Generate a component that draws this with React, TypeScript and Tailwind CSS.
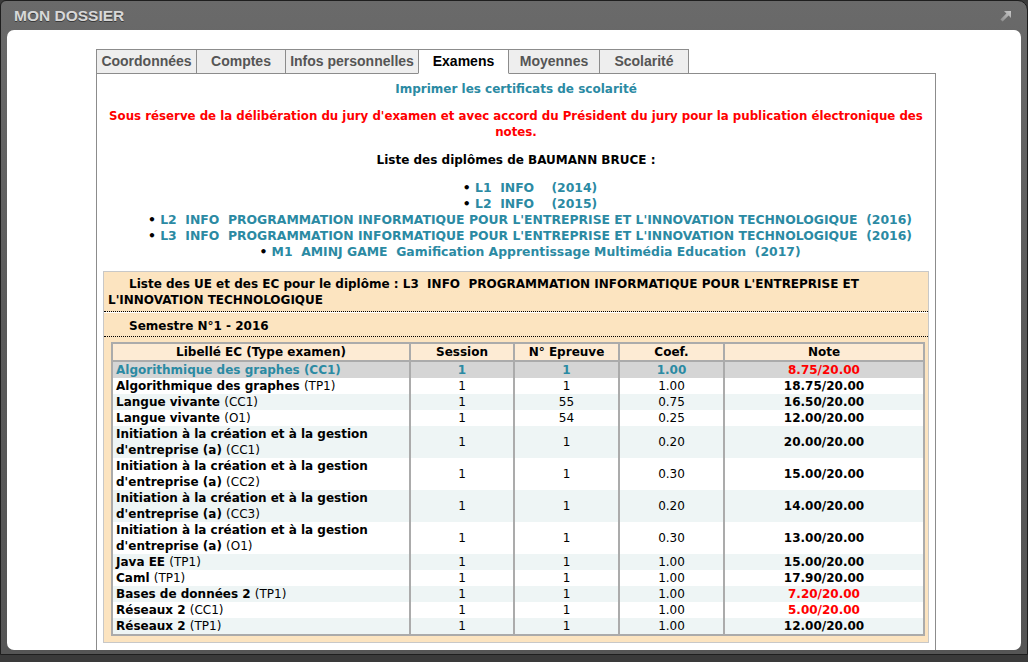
import React from "react";

const tabs = [
  { label: "Coordonnées", w: "w-[101px]" },
  { label: "Comptes", w: "w-[90px]" },
  { label: "Infos personnelles", w: "w-[134px]" },
  { label: "Examens", w: "w-[91px]", active: true },
  { label: "Moyennes", w: "w-[92px]" },
  { label: "Scolarité", w: "w-[90px]" },
];

const diplomes = [
  "L1  INFO    (2014)",
  "L2  INFO    (2015)",
  "L2  INFO  PROGRAMMATION INFORMATIQUE POUR L'ENTREPRISE ET L'INNOVATION TECHNOLOGIQUE  (2016)",
  "L3  INFO  PROGRAMMATION INFORMATIQUE POUR L'ENTREPRISE ET L'INNOVATION TECHNOLOGIQUE  (2016)",
  "M1  AMINJ GAME  Gamification Apprentissage Multimédia Education  (2017)",
];

type Row = {
  ec: string;
  type: string;
  session: string;
  epreuve: string;
  coef: string;
  note: string;
  low?: boolean;
};

const INIT = "Initiation à la création et à la gestion d'entreprise (a)";

const rows: Row[] = [
  { ec: "Algorithmique des graphes", type: "(CC1)", session: "1", epreuve: "1", coef: "1.00", note: "8.75/20.00", low: true },
  { ec: "Algorithmique des graphes", type: "(TP1)", session: "1", epreuve: "1", coef: "1.00", note: "18.75/20.00" },
  { ec: "Langue vivante", type: "(CC1)", session: "1", epreuve: "55", coef: "0.75", note: "16.50/20.00" },
  { ec: "Langue vivante", type: "(O1)", session: "1", epreuve: "54", coef: "0.25", note: "12.00/20.00" },
  { ec: INIT, type: "(CC1)", session: "1", epreuve: "1", coef: "0.20", note: "20.00/20.00" },
  { ec: INIT, type: "(CC2)", session: "1", epreuve: "1", coef: "0.30", note: "15.00/20.00" },
  { ec: INIT, type: "(CC3)", session: "1", epreuve: "1", coef: "0.20", note: "14.00/20.00" },
  { ec: INIT, type: "(O1)", session: "1", epreuve: "1", coef: "0.30", note: "13.00/20.00" },
  { ec: "Java EE", type: "(TP1)", session: "1", epreuve: "1", coef: "1.00", note: "15.00/20.00" },
  { ec: "Caml", type: "(TP1)", session: "1", epreuve: "1", coef: "1.00", note: "17.90/20.00" },
  { ec: "Bases de données 2", type: "(TP1)", session: "1", epreuve: "1", coef: "1.00", note: "7.20/20.00", low: true },
  { ec: "Réseaux 2", type: "(CC1)", session: "1", epreuve: "1", coef: "1.00", note: "5.00/20.00", low: true },
  { ec: "Réseaux 2", type: "(TP1)", session: "1", epreuve: "1", coef: "1.00", note: "12.00/20.00" },
];

const ExpandIcon = () => (
  <svg width="12" height="12" viewBox="0 0 12 12">
    <defs>
      <linearGradient id="ex" x1="0" y1="1" x2="1" y2="0">
        <stop offset="0" stopColor="#8a8a8a" />
        <stop offset="1" stopColor="#c8c8c8" />
      </linearGradient>
    </defs>
    <path d="M4 1 H11 V8 L8.6 5.6 L2.6 11.6 L0.4 9.4 L6.4 3.4 Z" fill="url(#ex)" />
  </svg>
);

export default function App() {
  const cell = "border-x-2 border-[#ababab] px-[3px] leading-[16px] align-middle";
  return (
    <div className="w-[1028px] h-[662px] bg-[#3a3a3a] overflow-hidden font-['Liberation_Sans',sans-serif]">
      <div className="h-[655px] rounded-tl-[6px] rounded-tr-[10px] border border-[#1e1e1e] bg-gradient-to-b from-[#6a6a6a] via-[#5a5a5a] to-[#555555] flex flex-col">
        <div className="h-[29px] flex items-center justify-between pl-[13px] pr-[15px] shrink-0">
          <span className="text-[15.5px] font-bold text-[#d8d8d8] [text-shadow:0_1px_0_#3a3a3a]">MON DOSSIER</span>
          <ExpandIcon />
        </div>
        <div className="mx-[6px] mb-[4px] bg-white rounded-[7px] flex-1 overflow-hidden pt-[20px] pl-[89px]">
          <div className="w-[840px]">
            {/* onglets */}
            <div className="flex items-end h-[24px]">
              {tabs.map((t) => (
                <div
                  key={t.label}
                  className={`${t.w} h-[25px] -mr-px flex items-center justify-center text-[14px] font-bold border ${
                    t.active
                      ? "bg-white text-black border-[#8c8c8c] border-b-white relative z-10"
                      : "bg-[#eeeeee] text-[#555] border-[#8c8c8c]"
                  }`}
                >
                  {t.label}
                </div>
              ))}
            </div>
            {/* contenu */}
            <div className="border border-[#8c8c8c] -mt-px pt-[7px] pb-[20px] h-[600px] font-['DejaVu_Sans',sans-serif] font-bold text-[12px] text-center">
              <div className="leading-[16px] text-[#2b8aa3]">Imprimer les certificats de scolarité</div>
              <p className="mt-[11px] px-[6px] leading-[16px] text-[11.8px] text-[#ff0000]">
                Sous réserve de la délibération du jury d'examen et avec accord du Président du jury pour la publication électronique des notes.
              </p>
              <div className="mt-[12px] leading-[16px] text-black">Liste des diplômes de BAUMANN BRUCE :</div>
              <ul className="mt-[12px] pl-[28px] leading-[16px] text-[#2b8aa3] text-[12.4px]">
                {diplomes.map((d) => (
                  <li key={d} className="whitespace-pre">
                    <span className="text-black">• </span>
                    {d}
                  </li>
                ))}
              </ul>

              {/* bloc UE */}
              <div className="mt-[11px] mx-[6px] border border-[#c8c8c8] bg-[#fce4c0] text-left text-[12px] text-black">
                <div className="px-[4px] pt-[4px] pb-[3px] leading-[16px] indent-[21px] border-b border-dotted border-black">
                  Liste des UE et des EC pour le diplôme : <span className="whitespace-pre">L3  INFO  </span>PROGRAMMATION INFORMATIQUE POUR L'ENTREPRISE ET L'INNOVATION TECHNOLOGIQUE
                </div>
                <div className="h-px bg-white" />
                <div className="px-[4px] pt-[5px] pb-[2px] leading-[16px] indent-[21px] border-b border-dotted border-black">
                  Semestre N°1 - 2016
                </div>
                <div className="pl-[7px] pr-[8px] pt-[5px] pb-[6px]">
                  <table className="w-[812px] border-collapse border-2 border-[#ababab] table-fixed">
                    <colgroup>
                      <col className="w-[298px]" />
                      <col className="w-[104px]" />
                      <col className="w-[105px]" />
                      <col className="w-[105px]" />
                      <col className="w-[200px]" />
                    </colgroup>
                    <thead>
                      <tr className="bg-[#fdebd4] border-b-2 border-[#ababab] h-[17px]">
                        <th className={`${cell} text-center font-bold`}>Libellé EC (Type examen)</th>
                        <th className={`${cell} text-center font-bold`}>Session</th>
                        <th className={`${cell} text-center font-bold`}>N° Epreuve</th>
                        <th className={`${cell} text-center font-bold`}>Coef.</th>
                        <th className={`${cell} text-center font-bold`}>Note</th>
                      </tr>
                    </thead>
                    <tbody>
                      {rows.map((r, i) => {
                        const sel = i === 0;
                        const bg = sel ? "bg-[#d5d5d5]" : i % 2 === 0 ? "bg-[#eef5f5]" : "bg-white";
                        const txt = sel ? "text-[#2b8aa3] font-bold" : "text-black font-normal";
                        return (
                          <tr key={i} className={bg}>
                            <td className={`${cell} text-left ${sel ? "text-[#2b8aa3]" : "text-black"}`}>
                              <span className="font-bold">{r.ec}</span>{" "}
                              <span className={sel ? "font-bold" : "font-normal"}>{r.type}</span>
                            </td>
                            <td className={`${cell} text-center ${txt}`}>{r.session}</td>
                            <td className={`${cell} text-center ${txt}`}>{r.epreuve}</td>
                            <td className={`${cell} text-center ${txt}`}>{r.coef}</td>
                            <td className={`${cell} text-center font-bold ${r.low ? "text-[#ff0000]" : "text-black"}`}>{r.note}</td>
                          </tr>
                        );
                      })}
                    </tbody>
                  </table>
                </div>
              </div>
            </div>
          </div>
        </div>
      </div>
    </div>
  );
}
